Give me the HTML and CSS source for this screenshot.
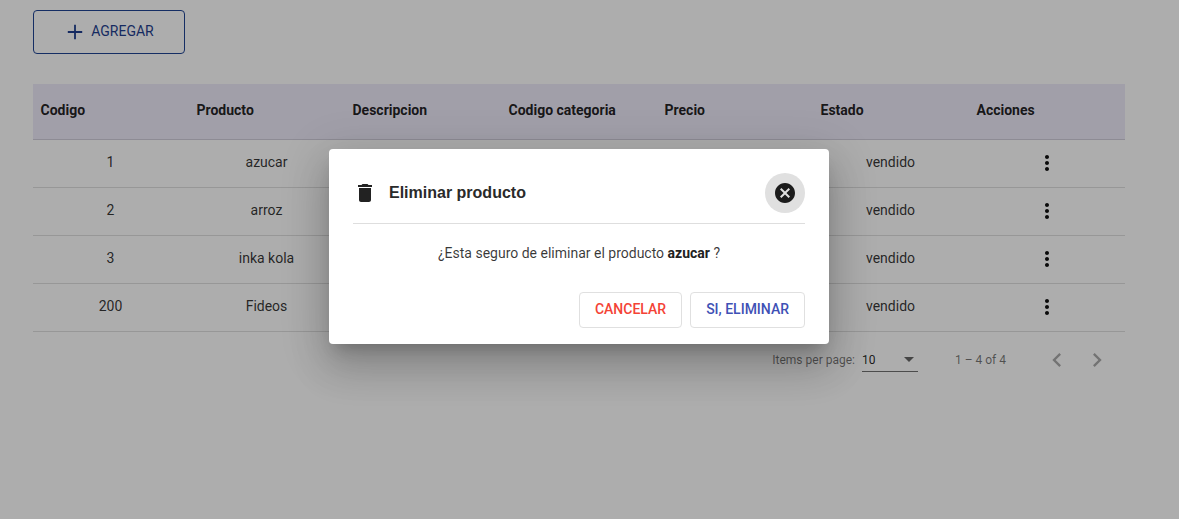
FILE: index.html
```html
<!DOCTYPE html>
<html lang="es">
<head>
<meta charset="utf-8">
<title>Productos</title>
<link rel="stylesheet" href="styles.css">
</head>
<body>
<main class="page">
  <button class="add"><svg width="24" height="24" viewBox="0 0 24 24"><path d="M4.8 12h14.4M12 4.8v14.4" stroke="currentColor" stroke-width="1.8"/></svg><span>AGREGAR</span></button>
  <div class="table">
    <div class="row head"><span>Codigo</span><span>Producto</span><span>Descripcion</span><span>Codigo categoria</span><span>Precio</span><span>Estado</span><span>Acciones</span></div>
    <div class="row"><span>1</span><span>azucar</span><span></span><span></span><span></span><span>vendido</span><span><svg class="more" viewBox="0 0 24 24"><use href="#dots"/></svg></span></div>
    <div class="row"><span>2</span><span>arroz</span><span></span><span></span><span></span><span>vendido</span><span><svg class="more" viewBox="0 0 24 24"><use href="#dots"/></svg></span></div>
    <div class="row"><span>3</span><span>inka kola</span><span></span><span></span><span></span><span>vendido</span><span><svg class="more" viewBox="0 0 24 24"><use href="#dots"/></svg></span></div>
    <div class="row"><span>200</span><span>Fideos</span><span></span><span></span><span></span><span>vendido</span><span><svg class="more" viewBox="0 0 24 24"><use href="#dots"/></svg></span></div>
  </div>
  <div class="paginator">
    <span class="per">Items per page:</span>
    <div class="select"><span>10</span><i class="arrow"></i></div>
    <span class="range">1 – 4 of 4</span>
    <svg class="nav" viewBox="0 0 24 24"><path d="M15.41 7.41L14 6l-6 6 6 6 1.41-1.41L10.83 12z"/></svg>
    <svg class="nav" viewBox="0 0 24 24"><path d="M10 6L8.59 7.41 13.17 12l-4.58 4.59L10 18l6-6z"/></svg>
  </div>
</main>
<div class="backdrop">
  <section class="dialog">
    <header class="title">
      <svg class="trash" viewBox="0 0 24 24"><path d="M6 19c0 1.1.9 2 2 2h8c1.1 0 2-.9 2-2V7H6v12zM19 4h-3.500l-1-1h-5l-1 1H5v2h14V4z"/></svg>
      <h2>Eliminar producto</h2>
      <button class="close"><svg width="24" height="24" viewBox="0 0 24 24"><path d="M12 2C6.470 2 2 6.470 2 12s4.470 10 10 10 10-4.470 10-10S17.530 2 12 2zm5 13.590L15.590 17 12 13.410 8.410 17 7 15.590 10.590 12 7 8.410 8.410 7 12 10.590 15.590 7 17 8.410 13.410 12 17 15.590z"/></svg></button>
    </header>
    <p class="message">¿Esta seguro de eliminar el producto <b>azucar</b> ?</p>
    <footer class="actions"><button class="warn">CANCELAR</button><button class="primary">SI, ELIMINAR</button></footer>
  </section>
</div>
<svg width="0" height="0"><defs><path id="dots" d="M12 8c1.100 0 2-.9 2-2s-.9-2-2-2-2 .9-2 2 .9 2 2 2zm0 2c-1.100 0-2 .9-2 2s.9 2 2 2 2-.9 2-2-.9-2-2-2zm0 6c-1.100 0-2 .9-2 2s.9 2 2 2 2-.9 2-2-.9-2-2-2z"/></defs></svg>
</body>
</html>
```
FILE: styles.css
```css
* { box-sizing: border-box; }
body { margin: 0; height: 519px; overflow: hidden; background: #fff; color: rgba(0,0,0,.87); font: 400 14px/20px Roboto, sans-serif; }
button { font-family: inherit; background: transparent; margin: 0; padding: 0; }
.page { padding: 10px 54px 0 33px; }
.add { display: flex; align-items: center; justify-content: center; width: 152px; height: 44px; padding: 0 1px 1px 0; border: 1px solid #1f4494; border-radius: 4px; color: #1f3f90; font-size: 14px; font-weight: 400; gap: 4px; }
.add svg { margin-top: 1px; }
.add span { padding-bottom: 1px; }
.table { margin-top: 30px; }
.row { display: grid; grid-template-columns: repeat(7, 156px); height: 48px; border-bottom: 1px solid #dfdfdf; align-items: center; text-align: center; padding-bottom: 3px; color: rgba(0,0,0,.8); }
.row span { padding-right: 1px; }
.head { height: 56px; background: #eeebfa; border-color: #d0cddb; color: rgba(0,0,0,.87); font-weight: 700; text-align: left; }
.head span { padding-left: 7.5px; }
.more { display: block; width: 24px; height: 24px; margin: 2px auto 0; fill: #111; }
.paginator { display: flex; align-items: center; height: 56px; justify-content: flex-end; padding-right: 14px; font-size: 12px; color: rgba(0,0,0,.54); }
.select { display: flex; align-items: center; justify-content: space-between; width: 56px; height: 24px; margin: 0 37px 0 7px; padding-right: 4px; border-bottom: 1px solid #707070; color: rgba(0,0,0,.87); }
.arrow { border: 5px solid transparent; border-top-color: #666; border-bottom: 0; }
.range { margin-right: 37px; }
.nav { width: 28px; height: 28px; fill: #aaa; }
.nav + .nav { margin-left: 12px; }
.backdrop { position: absolute; inset: 0; background: rgba(0,0,0,.32); padding: 149px 0 0 329px; }
.dialog { width: 500px; height: 195px; padding: 24px; background: #fff; border-radius: 4px; box-shadow: 0 11px 15px -7px rgba(0,0,0,.2), 0 24px 38px 3px rgba(0,0,0,.14), 0 9px 46px 8px rgba(0,0,0,.12); }
.title { display: flex; align-items: center; height: 51px; padding-bottom: 10px; border-bottom: 1px solid #dedede; }
.trash { width: 24px; height: 24px; fill: #222; }
h2 { margin: 0 auto 0 12px; font: 700 16px/20px "Liberation Sans", Arial, sans-serif; color: #2a2a2a; }
.close { display: grid; place-items: center; width: 40px; height: 40px; border: 0; border-radius: 50%; background: #e0e0e0; fill: #1c1c1c; }
.message { margin: 19px 0 29px; text-align: center; color: rgba(0,0,0,.78); }
.message b { font-weight: 700; color: #212121; }
.actions { display: flex; justify-content: flex-end; gap: 8px; }
.actions button { height: 36px; padding: 0 15px 2px; border: 1px solid #e0e0e0; border-radius: 4px; font-size: 14px; font-weight: 500; }
.actions .warn { color: #f44336; }
.actions .primary { color: #3f51b5; }
```
